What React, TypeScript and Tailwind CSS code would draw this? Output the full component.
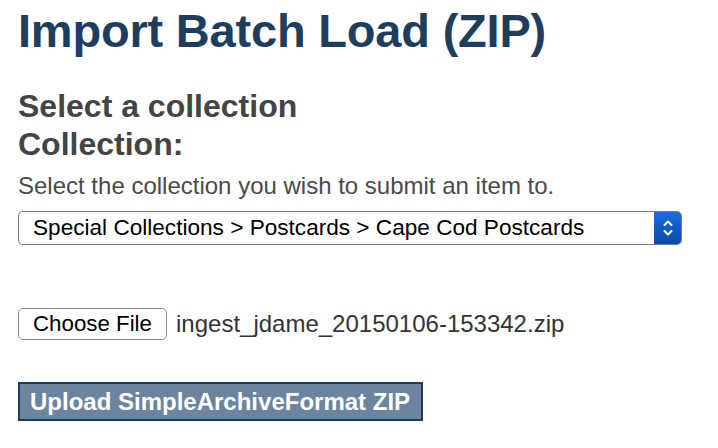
import React from "react";

export default function App() {
  return (
    <div
      className="w-[718px] h-[448px] bg-white overflow-hidden pl-[18px] pt-[4px] flex flex-col"
      style={{ fontFamily: '"Liberation Sans", Arial, sans-serif' }}
    >
      <h1 className="text-[47px] leading-[54px] font-bold text-[#1f3e5e] tracking-[-0.2px]">
        Import Batch Load (ZIP)
      </h1>
      <h2 className="mt-[29px] text-[32px] leading-[38px] font-bold text-[#444444]">
        Select a collection
        <br />
        Collection:
      </h2>
      <p className="mt-[9px] text-[24px] leading-[28px] text-[#4a4a4a]">
        Select the collection you wish to submit an item to.
      </p>
      <div className="mt-[11px] w-[664px] h-[34px] flex items-stretch rounded-[5px] border border-[#7a7a7a] bg-white overflow-hidden">
        <div className="flex-1 flex items-center pl-[14px] text-[22.6px] text-black whitespace-nowrap">
          Special Collections &gt; Postcards &gt; Cape Cod Postcards
        </div>
        <div className="w-[27px] bg-gradient-to-b from-[#1a6ee0] to-[#0a4aa8] flex items-center justify-center">
          <svg width="12" height="20" viewBox="0 0 12 20" fill="none" stroke="white" strokeWidth="2" strokeLinecap="round" strokeLinejoin="round">
            <path d="M2.5 7 L6 3.5 L9.5 7" />
            <path d="M2.5 13 L6 16.5 L9.5 13" />
          </svg>
        </div>
      </div>
      <div className="mt-[63px] flex items-center gap-[9px]">
        <div className="w-[149px] h-[32px] rounded-[5px] border border-[#8a8a8a] bg-white flex items-center justify-center text-[22.3px] text-black">
          Choose File
        </div>
        <span className="text-[24px] text-[#333333] leading-[28px]">ingest_jdame_20150106-153342.zip</span>
      </div>
      <div className="mt-[42px]">
        <div className="inline-flex items-center h-[39px] w-[405px] border-2 border-[#1d3a5a] bg-[#6b84a0] pl-[10px] text-[24px] font-bold text-white whitespace-nowrap">
          Upload SimpleArchiveFormat ZIP
        </div>
      </div>
    </div>
  );
}
